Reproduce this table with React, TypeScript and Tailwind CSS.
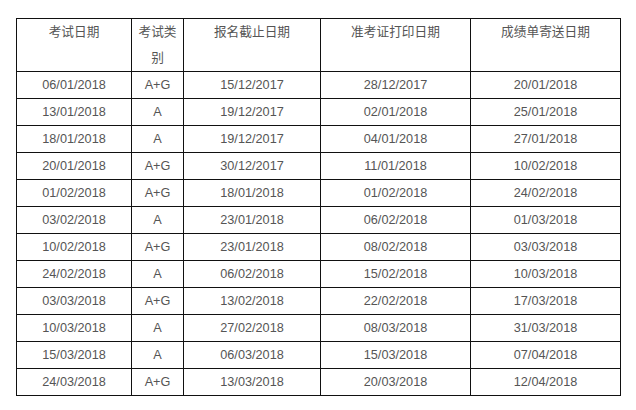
const rows: [string, string, string, string, string][] = [
  ["06/01/2018", "A+G", "15/12/2017", "28/12/2017", "20/01/2018"],
  ["13/01/2018", "A", "19/12/2017", "02/01/2018", "25/01/2018"],
  ["18/01/2018", "A", "19/12/2017", "04/01/2018", "27/01/2018"],
  ["20/01/2018", "A+G", "30/12/2017", "11/01/2018", "10/02/2018"],
  ["01/02/2018", "A+G", "18/01/2018", "01/02/2018", "24/02/2018"],
  ["03/02/2018", "A", "23/01/2018", "06/02/2018", "01/03/2018"],
  ["10/02/2018", "A+G", "23/01/2018", "08/02/2018", "03/03/2018"],
  ["24/02/2018", "A", "06/02/2018", "15/02/2018", "10/03/2018"],
  ["03/03/2018", "A+G", "13/02/2018", "22/02/2018", "17/03/2018"],
  ["10/03/2018", "A", "27/02/2018", "08/03/2018", "31/03/2018"],
  ["15/03/2018", "A", "06/03/2018", "15/03/2018", "07/04/2018"],
  ["24/03/2018", "A+G", "13/03/2018", "20/03/2018", "12/04/2018"],
]

const headers = ["考试日期", "考试类别", "报名截止日期", "准考证打印日期", "成绩单寄送日期"]

export default function App() {
  return (
    <div
      className="w-[636px] h-[410px] bg-white pt-[18px] pl-[16px]"
      style={{ fontFamily: '"Liberation Sans", "Noto Sans CJK SC", sans-serif' }}
    >
      <table className="table-fixed border-collapse w-[604px] text-[12.7px] text-[#555] text-center">
        <colgroup>
          <col className="w-[115px]" />
          <col className="w-[52px]" />
          <col className="w-[137px]" />
          <col className="w-[150px]" />
          <col className="w-[150px]" />
        </colgroup>
        <thead>
          <tr>
            {headers.map((h, i) => (
              <th
                key={h}
                className={`border border-[#111] font-normal align-top leading-[26px] h-[53px] p-0 ${
                  i === 1 ? "px-[5px]" : ""
                }`}
              >
                {h}
              </th>
            ))}
          </tr>
        </thead>
        <tbody>
          {rows.map((r) => (
            <tr key={r[0]}>
              {r.map((c, j) => (
                <td key={j} className="border border-[#111] h-[27px] p-0 leading-[26px]">
                  {c}
                </td>
              ))}
            </tr>
          ))}
        </tbody>
      </table>
    </div>
  )
}
